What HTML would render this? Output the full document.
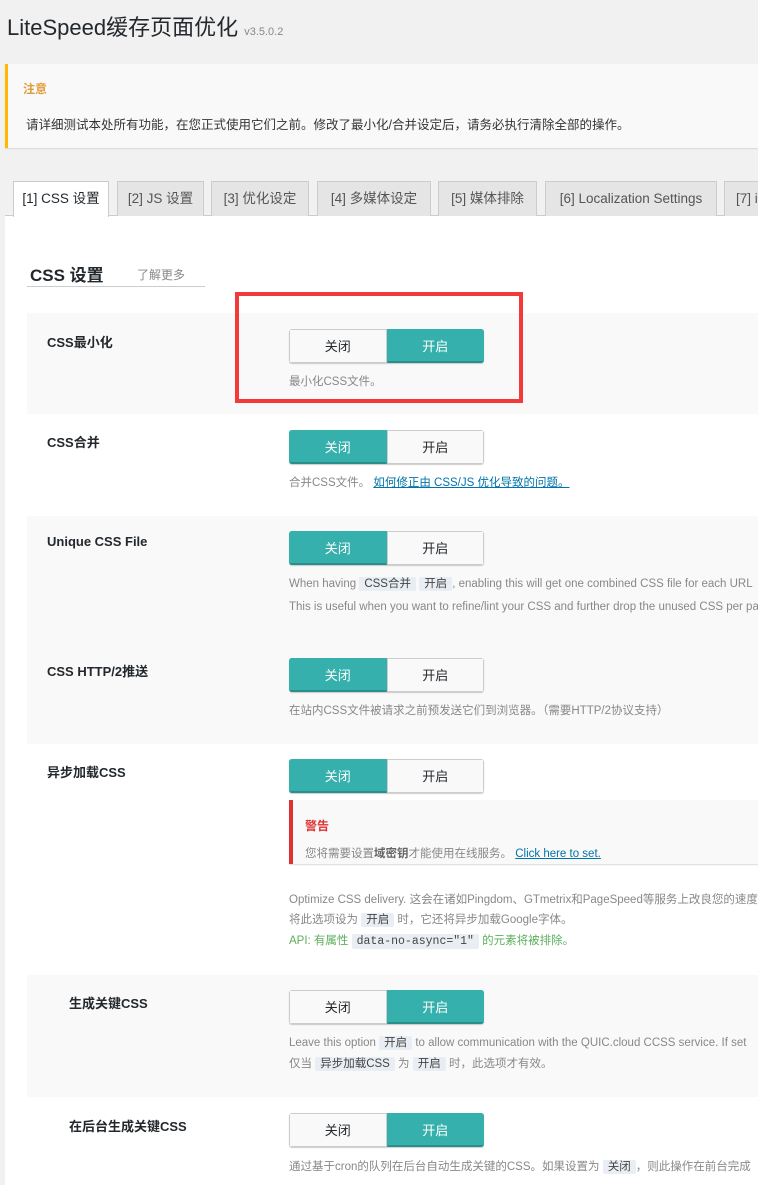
<!DOCTYPE html>
<html><head><meta charset="utf-8"><style>
*{box-sizing:border-box;margin:0;padding:0}
body{width:758px;height:1181px;overflow:hidden;background:#f1f1f1;font-family:"Liberation Sans","Noto Sans CJK SC",sans-serif;color:#23282d;position:relative;font-size:13px}
.abs{position:absolute}
.title{left:7px;top:10px;font-size:22px;color:#23282d}
.title small{font-size:11px;color:#888}
.notice{left:5px;top:64px;width:760px;height:84px;background:#f9f9f9;border-left:3px solid #ffb900;box-shadow:0 1px 1px rgba(0,0,0,.1)}
.tab{top:181px;height:35px;border:1px solid #ccc;border-bottom:none;background:#e5e5e5;color:#555;font-size:13.5px;line-height:34px;text-align:center}
.tab.on{background:#fff;color:#23282d;height:36px}
.panel{left:5px;top:215px;width:760px;height:970px;background:#fff;border-top:1px solid #ccc}
.row{left:27px;width:740px}
.gray{background:#f9f9f9}
.lbl{font-weight:bold;font-size:13px;color:#23282d}
.tg{width:195px;height:34px;display:flex;border-radius:3px;overflow:hidden;box-shadow:0 1px 1px rgba(0,0,0,.2)}
.tg div{flex:1;text-align:center;line-height:33px;font-size:13px;border:1px solid #ccc;background:#f9f9f9;color:#23282d}
.tg div.a{background:#36b0ac;border-color:#36b0ac;color:#fff;border-bottom:2px solid #2a8f8b}
.d{font-size:11.5px;color:#888;white-space:nowrap}
code,.c{background:#e8eef3;padding:1px 5px;font-size:11.5px;color:#444;border-radius:2px}
code{font-family:"Liberation Mono",monospace}
a{color:#0073aa}
</style></head><body>
<div class="abs title">LiteSpeed缓存页面优化 <small>v3.5.0.2</small></div>
<div class="abs notice">
<div class="abs" style="left:15px;top:16px;color:#e09b3c;font-size:12px;font-weight:bold">注意</div>
<div class="abs" style="left:18px;top:50px;font-size:12.5px;color:#333;white-space:nowrap">请详细测试本处所有功能，在您正式使用它们之前。修改了最小化/合并设定后，请务必执行清除全部的操作。</div>
</div>
<div class="abs panel"></div>
<div class="abs tab on" style="left:13px;width:96px">[1] CSS 设置</div>
<div class="abs tab" style="left:117px;width:87px">[2] JS 设置</div>
<div class="abs tab" style="left:211px;width:98px">[3] 优化设定</div>
<div class="abs tab" style="left:317px;width:114px">[4] 多媒体设定</div>
<div class="abs tab" style="left:438px;width:99px">[5] 媒体排除</div>
<div class="abs tab" style="left:545px;width:172px">[6] Localization Settings</div>
<div class="abs tab" style="left:724px;width:60px;text-align:left;padding-left:11px">[7] i</div>
<div class="abs" style="left:30px;top:261px;font-size:17px;font-weight:bold;color:#23282d">CSS 设置</div>
<div class="abs" style="left:137px;top:266px;font-size:12px;color:#888">了解更多</div>
<div class="abs" style="left:27px;top:286px;width:178px;height:1px;background:#ccc"></div>

<div class="abs row gray" style="top:313px;height:101px"></div>
<div class="abs row" style="top:414px;height:102px"></div>
<div class="abs row gray" style="top:516px;height:228px"></div>
<div class="abs row gray" style="top:975px;height:122px"></div>

<div class="abs lbl" style="left:47px;top:332px">CSS最小化</div>
<div class="abs tg" style="left:289px;top:329px"><div>关闭</div><div class="a">开启</div></div>
<div class="abs d" style="left:289px;top:373px">最小化CSS文件。</div>
<div class="abs" style="left:235px;top:292px;width:288px;height:111px;border:4px solid #f23a3a"></div>

<div class="abs lbl" style="left:47px;top:432px">CSS合并</div>
<div class="abs tg" style="left:289px;top:430px"><div class="a">关闭</div><div>开启</div></div>
<div class="abs d" style="left:289px;top:474px">合并CSS文件。 <a href="#">如何修正由 CSS/JS 优化导致的问题。</a></div>

<div class="abs lbl" style="left:47px;top:534px">Unique CSS File</div>
<div class="abs tg" style="left:289px;top:531px"><div class="a">关闭</div><div>开启</div></div>
<div class="abs d" style="left:289px;top:575px">When having <span class="c">CSS合并</span> <span class="c">开启</span>, enabling this will get one combined CSS file for each URL</div>
<div class="abs d" style="left:289px;top:601px">This is useful when you want to refine/lint your CSS and further drop the unused CSS per page.</div>

<div class="abs lbl" style="left:47px;top:661px">CSS HTTP/2推送</div>
<div class="abs tg" style="left:289px;top:658px"><div class="a">关闭</div><div>开启</div></div>
<div class="abs d" style="left:289px;top:702px">在站内CSS文件被请求之前预发送它们到浏览器。（需要HTTP/2协议支持）</div>

<div class="abs lbl" style="left:47px;top:762px">异步加载CSS</div>
<div class="abs tg" style="left:289px;top:759px"><div class="a">关闭</div><div>开启</div></div>
<div class="abs" style="left:289px;top:800px;width:480px;height:64px;background:#f9f9f9;border-left:4px solid #dc3232;box-shadow:0 1px 1px rgba(0,0,0,.15)">
<div class="abs" style="left:12px;top:17px;color:#dc3232;font-size:12px;font-weight:bold">警告</div>
<div class="abs d" style="left:12px;top:45px">您将需要设置<b style="color:#666">域密钥</b>才能使用在线服务。 <a href="#">Click here to set.</a></div>
</div>
<div class="abs d" style="left:289px;top:891px">Optimize CSS delivery. 这会在诸如Pingdom、GTmetrix和PageSpeed等服务上改良您的速度</div>
<div class="abs d" style="left:289px;top:911px">将此选项设为 <span class="c">开启</span> 时，它还将异步加载Google字体。</div>
<div class="abs d" style="left:289px;top:932px;color:#5cae5c">API: 有属性 <code>data-no-async="1"</code> 的元素将被排除。</div>

<div class="abs lbl" style="left:69px;top:993px">生成关键CSS</div>
<div class="abs tg" style="left:289px;top:990px"><div>关闭</div><div class="a">开启</div></div>
<div class="abs d" style="left:289px;top:1034px">Leave this option <span class="c">开启</span> to allow communication with the QUIC.cloud CCSS service. If set</div>
<div class="abs d" style="left:289px;top:1055px">仅当 <span class="c">异步加载CSS</span> 为 <span class="c">开启</span> 时，此选项才有效。</div>

<div class="abs lbl" style="left:69px;top:1116px">在后台生成关键CSS</div>
<div class="abs tg" style="left:289px;top:1113px"><div>关闭</div><div class="a">开启</div></div>
<div class="abs d" style="left:289px;top:1158px">通过基于cron的队列在后台自动生成关键的CSS。如果设置为 <span class="c">关闭</span>，则此操作在前台完成</div>
</body></html>
